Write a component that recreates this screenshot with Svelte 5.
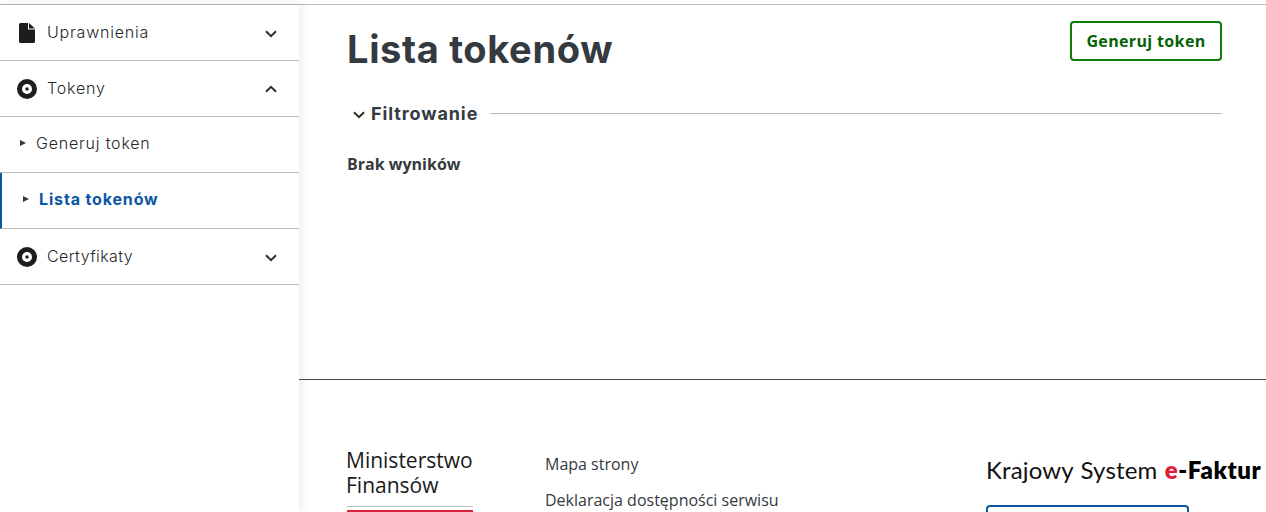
<script lang="ts">
	const lista = 'Lista tokenów';
</script>

<div class="page">
	<div class="layout">
		<!-- Left: side menu -->
		<aside class="side">
			<div class="row">
				<svg class="ico doc" viewBox="0 0 16 20"><path d="M1.500 0H9v6.500h7v12a1.500 1.500 0 0 1-1.500 1.500h-13A1.500 1.500 0 0 1 0 18.500v-17A1.500 1.500 0 0 1 1.500 0zM10 0l6 5.500h-6z" fill="#1d1d1d" /></svg>
				<span class="label">Uprawnienia</span>
				<svg class="chev" viewBox="0 0 12 8"><path d="M1 1.200l5 5 5-5" /></svg>
			</div>
			<div class="row">
				<svg class="ico disc" viewBox="0 0 20 20"><circle cx="10" cy="10" r="10" fill="#1d1d1d" /><circle cx="10" cy="10" r="5" fill="#fff" /><circle cx="10" cy="10" r="1.700" fill="#1d1d1d" /></svg>
				<span class="label">Tokeny</span>
				<svg class="chev up" viewBox="0 0 12 8"><path d="M1 6.800l5-5 5 5" /></svg>
			</div>
			<div class="row sub">
				<span class="tri"></span>
				<span class="label">Generuj token</span>
			</div>
			<div class="row sub active">
				<span class="tri"></span>
				<span class="label">{lista}</span>
			</div>
			<div class="row">
				<svg class="ico disc" viewBox="0 0 20 20"><circle cx="10" cy="10" r="10" fill="#1d1d1d" /><circle cx="10" cy="10" r="5" fill="#fff" /><circle cx="10" cy="10" r="1.700" fill="#1d1d1d" /></svg>
				<span class="label tight">Certyfikaty</span>
				<svg class="chev" viewBox="0 0 12 8"><path d="M1 1.200l5 5 5-5" /></svg>
			</div>
		</aside>

		<!-- Right: content and footer -->
		<div class="right">
			<main class="content">
				<div class="head">
					<h1>{lista}</h1>
					<button class="gen">Generuj token</button>
				</div>
				<div class="filter">
					<svg class="fchev" viewBox="0 0 12 8"><path d="M1 1.200l5 5 5-5" /></svg>
					<span>Filtrowanie</span>
					<i></i>
				</div>
				<p class="empty">Brak wyników</p>
			</main>
			<footer class="foot">
				<div class="logo">
					<div class="mf">Ministerstwo<br />Finansów</div>
					<div class="grey"></div>
					<div class="red"></div>
				</div>
				<nav class="links">
					<span>Mapa strony</span>
					<span>Deklaracja dostępności serwisu</span>
				</nav>
				<div class="ksef">
					<div class="ktitle">Krajowy System <b class="e">e</b><b>-Faktur</b></div>
					<div class="kbtn"></div>
				</div>
			</footer>
		</div>
	</div>
</div>

<style>
	:global(body) {
		margin: 0;
		background: #fff;
	}

	.page {
		height: 512px;
		overflow: hidden;
		padding-top: 4px;
		box-sizing: border-box;
		color: #343a40;
	}

	.layout {
		display: flex;
		border-top: 1px solid #b9b9b9;
		height: 507px;
	}

	.side {
		width: 299px;
		flex: none;
		box-shadow: 3px 0 10px rgba(0, 0, 0, 0.08);
		position: relative;
	}

	.row {
		height: 56px;
		box-sizing: border-box;
		border-bottom: 1px solid #b9b9b9;
		display: flex;
		align-items: center;
		padding: 0 22px 0 19px;
		font-family: Inter, "Liberation Sans", sans-serif;
		font-size: 16px;
		color: #24282c;
	}

	.ico {
		flex: none;
	}

	.doc {
		width: 16px;
		height: 20px;
		margin-right: 12px;
	}

	.disc {
		width: 20px;
		height: 20px;
		margin-left: -2px;
		margin-right: 10px;
	}

	.label {
		flex: 1;
		letter-spacing: 0.8px;
		font-weight: 300;
		margin-bottom: 2px;
	}

	.label.tight {
		letter-spacing: 0.4px;
	}

	.chev {
		width: 12px;
		height: 8px;
		margin-top: 2px;
		flex: none;
	}

	.chev.up {
		margin-top: 0;
	}

	.chev path,
	.fchev path {
		fill: none;
		stroke: #2e2e22;
		stroke-width: 2;
	}

	.sub {
		padding-left: 20px;
	}

	.sub .label {
		margin-bottom: 4px;
	}

	.tri {
		width: 0;
		height: 0;
		border-left: 6px solid #343a40;
		border-top: 3.500px solid transparent;
		border-bottom: 3.500px solid transparent;
		margin-right: 10px;
		margin-bottom: 3px;
	}

	.active {
		border-left: 2px solid #0b57a4;
		padding-left: 21px;
	}

	.active .label {
		color: #0b57a4;
		font-weight: 700;
		letter-spacing: 0.85px;
	}

	.right {
		flex: 1;
		min-width: 0;
		display: flex;
		flex-direction: column;
	}

	.content {
		height: 375px;
		box-sizing: border-box;
		padding: 16px 44px 0 48px;
		border-bottom: 1px solid #4a4a4a;
	}

	.head {
		display: flex;
		justify-content: space-between;
		align-items: flex-start;
	}

	h1 {
		margin: 0;
		font-family: Inter, "Liberation Sans", sans-serif;
		font-weight: 700;
		font-size: 38px;
		line-height: 56px;
		letter-spacing: 0.65px;
		color: #343a40;
	}

	.gen {
		width: 152px;
		height: 40px;
		background: #fff;
		border: 2px solid #0a7d0a;
		border-radius: 4px;
		color: #056305;
		font-family: "Open Sans", sans-serif;
		font-weight: 700;
		font-size: 16px;
		letter-spacing: 0.35px;
		padding: 0;
	}

	.filter {
		display: flex;
		align-items: center;
		margin-top: 23px;
		height: 26px;
		font-family: Inter, "Liberation Sans", sans-serif;
		font-weight: 700;
		font-size: 18px;
		letter-spacing: 0.9px;
		padding-left: 6px;
	}

	.fchev {
		width: 12px;
		height: 8px;
		margin-right: 6px;
		margin-top: 3px;
	}

	.filter i {
		flex: 1;
		height: 1px;
		background: #b9b9b9;
		margin-left: 12px;
	}

	.empty {
		margin: 26px 0 0;
		font-family: "Open Sans", sans-serif;
		font-weight: 700;
		font-size: 16px;
		line-height: 24px;
		color: #343a40;
	}

	.foot {
		flex: 1;
		display: flex;
		padding: 68px 0 0 48px;
		overflow: hidden;
	}

	.logo {
		width: 126px;
		flex: none;
	}

	.mf {
		font-family: "Open Sans", sans-serif;
		font-size: 21px;
		line-height: 25px;
		color: #1a1a1a;
		white-space: nowrap;
		margin-left: -1px;
	}

	.grey {
		height: 1px;
		background: #bbb;
		margin-top: 8px;
	}

	.red {
		height: 10px;
		background: #dc1f3c;
		margin-top: 3px;
	}

	.links {
		margin-left: 72px;
		margin-top: 4px;
		width: 441px;
		flex: none;
		display: flex;
		flex-direction: column;
		gap: 12px;
		font-family: "Open Sans", sans-serif;
		font-size: 16px;
		line-height: 24px;
		color: #343a40;
	}

	.ksef {
		flex: none;
		width: 279px;
	}

	.ktitle {
		font-family: Lato, sans-serif;
		font-size: 24px;
		line-height: 32px;
		color: #111;
		white-space: nowrap;
		margin-top: 6px;
		letter-spacing: 0.15px;
		word-spacing: 1px;
	}

	.ktitle b {
		font-weight: 800;
		color: #000;
		letter-spacing: 0.6px;
	}

	.ktitle .e {
		color: #dc1f3c;
	}

	.kbtn {
		width: 203px;
		height: 40px;
		box-sizing: border-box;
		border: 2px solid #0b57a4;
		border-radius: 4px;
		margin-top: 19px;
	}
</style>
